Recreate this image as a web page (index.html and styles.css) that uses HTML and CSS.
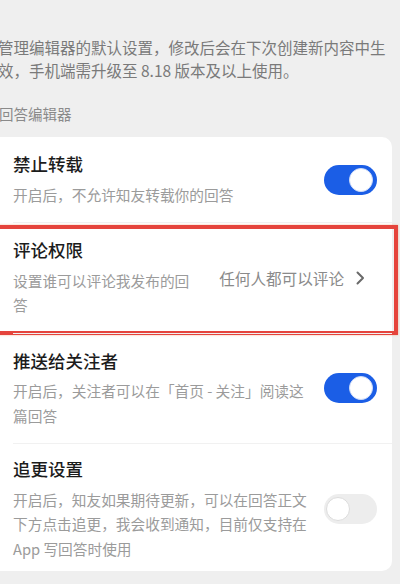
FILE: index.html
```html
<!DOCTYPE html>
<html lang="zh-CN">
<head>
<meta charset="utf-8">
<title>回答编辑器设置</title>
<link rel="stylesheet" href="styles.css">
</head>
<body>
<div class="page">
  <p class="intro">管理编辑器的默认设置，修改后会在下次创建新内容中生效，手机端需升级至 8.18 版本及以上使用。</p>
  <div class="section-label">回答编辑器</div>
  <div class="card">
    <div class="row">
      <div class="text">
        <div class="title">禁止转载</div>
        <div class="desc">开启后，不允许知友转载你的回答</div>
      </div>
      <div class="toggle on"><span class="knob"></span></div>
    </div>
    <div class="row">
      <div class="text narrow">
        <div class="title">评论权限</div>
        <div class="desc">设置谁可以评论我发布的回答</div>
      </div>
      <div class="value">
        <span>任何人都可以评论</span>
        <svg class="chev" width="10" height="14" viewBox="0 0 10 14"><polyline points="2.5,1.5 8,7 2.5,12.5" fill="none" stroke="#6a6a6a" stroke-width="2" stroke-linecap="round" stroke-linejoin="round"/></svg>
      </div>
      <div class="highlight"></div>
    </div>
    <div class="row">
      <div class="text">
        <div class="title">推送给关注者</div>
        <div class="desc">开启后，关注者可以在「首页 - 关注」阅读这篇回答</div>
      </div>
      <div class="toggle on"><span class="knob"></span></div>
    </div>
    <div class="row last">
      <div class="text">
        <div class="title">追更设置</div>
        <div class="desc">开启后，知友如果期待更新，可以在回答正文下方点击追更，我会收到通知，目前仅支持在 App 写回答时使用</div>
      </div>
      <div class="toggle off"><span class="knob"></span></div>
    </div>
  </div>
</div>
</body>
</html>
```

FILE: styles.css
```css
html, body {
  margin: 0;
  padding: 0;
}
body {
  background: #efefef;
  font-family: "Noto Sans CJK SC", "Noto Sans", sans-serif;
  width: 400px;
  height: 584px;
  overflow: hidden;
}
.page {
  padding-top: 36px;
}
.intro {
  margin: 0 0 0 -2px;
  font-size: 15.5px;
  line-height: 23px;
  color: #7a7a7a;
  width: 395px;
}
.section-label {
  margin: 22px 0 0 -1px;
  font-size: 14.5px;
  line-height: 20px;
  color: #8a8a8a;
}
.card {
  margin-top: 13px;
  width: 392px;
  background: #fff;
  border-radius: 0 10px 10px 0;
}
.row {
  position: relative;
  display: flex;
  align-items: center;
  margin-left: 13px;
  padding: 15px 15px 15px 0;
  border-top: 1px solid #f1f1f1;
}
.row:first-child {
  border-top: none;
}
.row.last {
  padding-top: 13px;
  padding-bottom: 10px;
}
.text {
  flex: 1;
  min-width: 0;
  margin-right: 14px;
}
.text.narrow {
  margin-right: 28px;
}
.title {
  font-size: 17.5px;
  line-height: 24px;
  font-weight: 500;
  color: #1c1c1c;
}
.desc {
  margin-top: 6.5px;
  font-size: 14.7px;
  line-height: 24.5px;
  color: #9b9b9b;
}
.toggle {
  position: relative;
  flex: none;
  width: 53px;
  height: 30px;
  border-radius: 15px;
}
.toggle.on {
  background: #1b5ee6;
}
.toggle.off {
  background: #ededed;
}
.knob {
  position: absolute;
  top: 3px;
  width: 22px;
  height: 22px;
  border-radius: 50%;
  background: #fff;
}
.toggle.on .knob {
  right: 4px;
  border: 1px solid #cfdcf8;
}
.toggle.off .knob {
  left: 2px;
  border: 1px solid #dcdcdc;
}
.value {
  flex: none;
  display: flex;
  align-items: center;
  gap: 11px;
  margin-right: 12px;
  font-size: 15.6px;
  color: #8a8a8a;
}
.chev {
  display: block;
}
.highlight {
  position: absolute;
  left: -17px;
  right: -6px;
  top: 2px;
  bottom: -2px;
  border: 4.5px solid #e5443c;
  box-shadow: 0 0 2px rgba(240, 120, 60, 0.5);
  pointer-events: none;
}
```
